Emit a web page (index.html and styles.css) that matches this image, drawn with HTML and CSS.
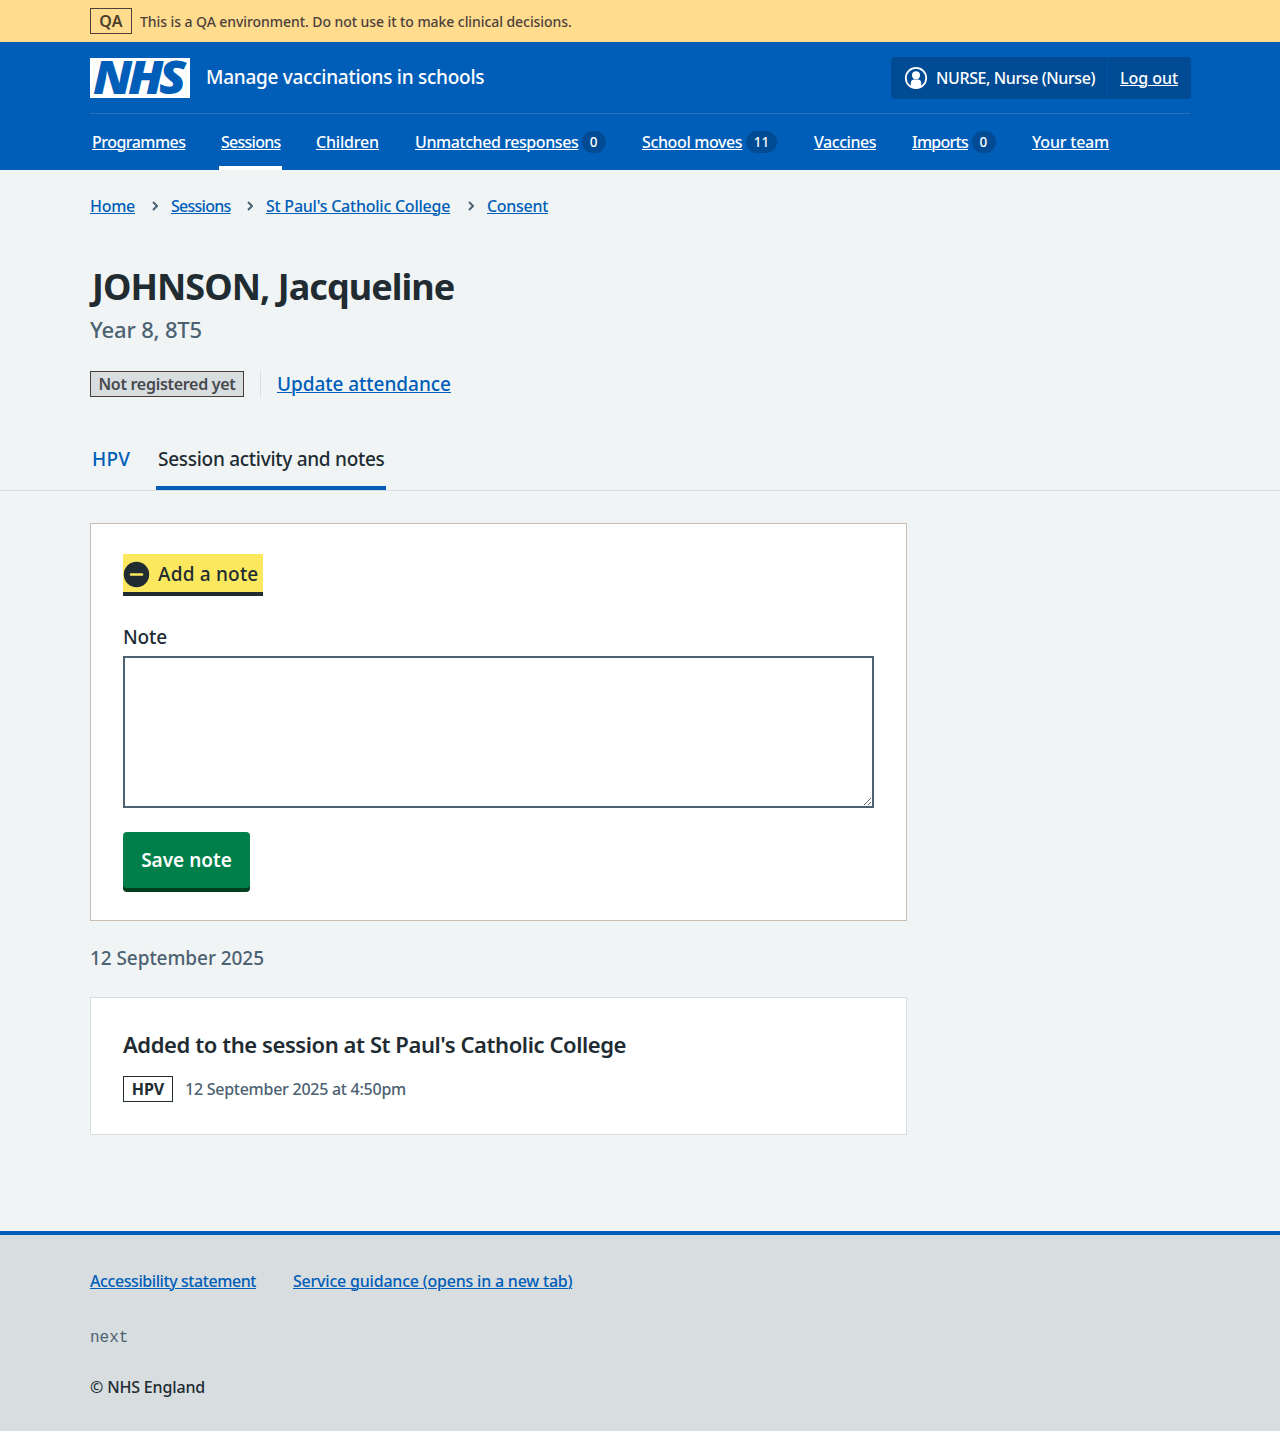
FILE: index.html
```html
<!DOCTYPE html>
<html lang="en">
<head>
<meta charset="utf-8">
<title>JOHNSON, Jacqueline – Manage vaccinations in schools</title>
<link rel="stylesheet" href="styles.css">
</head>
<body>
<div class="env">
  <div class="container env-inner">
    <strong class="tag tag-env">QA</strong>
    <span class="env-text">This is a QA environment. Do not use it to make clinical decisions.</span>
  </div>
</div>

<header class="header">
  <div class="container">
    <div class="header-top">
      <a class="brand" href="#">
        <svg class="logo" viewBox="0 0 100 40" width="100" height="40" role="img" aria-label="NHS">
          <rect width="100" height="40" fill="#fff"/>
          <text class="logo-text" x="3" y="36.2" textLength="89" lengthAdjust="spacingAndGlyphs">NHS</text>
        </svg>
        <span class="service">Manage vaccinations in schools</span>
      </a>
      <div class="account">
        <span class="account-user">
          <svg class="user-icon" viewBox="0 0 24 24" width="24" height="24" aria-hidden="true">
            <circle cx="12" cy="12" r="10.200" fill="none" stroke="#fff" stroke-width="1.800"/>
            <circle cx="12" cy="9.200" r="4" fill="#fff"/>
            <path d="M6.800 21v-4a3.500 3.500 0 0 1 3.500-3.500h3.400a3.500 3.500 0 0 1 3.500 3.500v4l-5.200 2z" fill="#fff"/>
          </svg>
          <span class="user-name">NURSE, Nurse (Nurse)</span>
        </span>
        <span class="account-out"><a class="logout" href="#">Log out</a></span>
      </div>
    </div>
    <nav class="nav">
      <span class="nav-item nav-programmes"><a href="#">Programmes</a></span>
      <span class="nav-item nav-sessions current"><a href="#">Sessions</a></span>
      <span class="nav-item nav-children"><a href="#">Children</a></span>
      <span class="nav-item nav-unmatched"><a href="#">Unmatched responses</a><span class="count">0</span></span>
      <span class="nav-item nav-moves"><a href="#">School moves</a><span class="count">11</span></span>
      <span class="nav-item nav-vaccines"><a href="#">Vaccines</a></span>
      <span class="nav-item nav-imports"><a href="#">Imports</a><span class="count">0</span></span>
      <span class="nav-item nav-team"><a href="#">Your team</a></span>
    </nav>
  </div>
</header>

<div class="container">
  <nav class="breadcrumb">
    <a class="bc-home" href="#">Home</a>
    <svg class="chevron" viewBox="0 0 6 10" width="6" height="10"><path d="M1 1l4 4-4 4"/></svg>
    <a class="bc-sessions" href="#">Sessions</a>
    <svg class="chevron" viewBox="0 0 6 10" width="6" height="10"><path d="M1 1l4 4-4 4"/></svg>
    <a class="bc-school" href="#">St Paul's Catholic College</a>
    <svg class="chevron" viewBox="0 0 6 10" width="6" height="10"><path d="M1 1l4 4-4 4"/></svg>
    <a class="bc-consent" href="#">Consent</a>
  </nav>
  <h1 class="title">JOHNSON, Jacqueline</h1>
  <p class="caption">Year 8, 8T5</p>
  <div class="actions">
    <strong class="tag tag-grey">Not registered yet</strong>
    <span class="action"><a class="update" href="#">Update attendance</a></span>
  </div>
</div>

<nav class="tabs">
  <div class="container tabs-inner">
    <a class="tab tab-hpv" href="#">HPV</a>
    <a class="tab tab-activity tab-current" href="#">Session activity and notes</a>
  </div>
</nav>

<main class="container">
  <div class="column">
    <section class="card note-card">
      <div class="expander">
        <svg class="minus" viewBox="0 0 27 27" width="27" height="27" aria-hidden="true">
          <circle cx="13.500" cy="13.500" r="12.700" fill="#212b32"/>
          <path d="M8 13.500h11" stroke="#fbe85f" stroke-width="2.600" stroke-linecap="round"/>
        </svg>
        <span class="expander-text">Add a note</span>
      </div>
      <label class="label" for="note">Note</label>
      <textarea class="textarea" id="note"></textarea>
      <button class="button" type="button">Save note</button>
    </section>
    <h2 class="date">12 September 2025</h2>
    <section class="card event">
      <h3 class="event-title">Added to the session at St Paul's Catholic College</h3>
      <div class="event-meta">
        <strong class="tag tag-hpv">HPV</strong>
        <span class="event-time">12 September 2025 at 4:50pm</span>
      </div>
    </section>
  </div>
</main>

<footer class="footer">
  <div class="container">
    <div class="footer-links">
      <a class="fl-access" href="#">Accessibility statement</a>
      <a class="fl-guide" href="#">Service guidance (opens in a new tab)</a>
    </div>
    <p class="version">next</p>
    <p class="copyright">© NHS England</p>
  </div>
</footer>
</body>
</html>
```
FILE: styles.css
```css
* { box-sizing: border-box; }

body {
  margin: 0;
  background: #f0f4f5;
  color: #212b32;
  font: 500 16px/24px "Noto Sans", "Open Sans", sans-serif;
  white-space: nowrap;
}

h1, h2, h3, p { margin: 0; }

a {
  color: #005eb8;
  text-decoration: underline;
  text-decoration-thickness: 1px;
  text-underline-offset: 1px;
}

.container { width: 1100px; margin: 0 auto; }

/* Tags */
.tag {
  display: flex;
  align-items: center;
  justify-content: center;
  height: 26px;
  border: 1px solid;
  font-size: 16px;
  font-weight: 600;
}
.tag-env { width: 42px; color: #4d3f2b; letter-spacing: .2px; border-color: #4d3f3b; }
.tag-grey { width: 154px; background: #d8dde0; color: #46494c; border-color: #4a3c36; letter-spacing: -.29px; }
.tag-hpv { width: 50px; color: #212b32; font-weight: 700; letter-spacing: -.1px; }

/* Environment banner */
.env { background: #ffdc8e; color: #4d3f3b; height: 42px; }
.env-inner { display: flex; align-items: center; gap: 8px; height: 42px; }
.env-text { font-size: 14px; letter-spacing: -.07px; padding-top: 1px; }

/* Header */
.header { background: #005eb8; height: 128px; }
.header a { color: #fff; }
.header-top {
  display: flex;
  align-items: center;
  justify-content: space-between;
  height: 72px;
  border-bottom: 1px solid #2674c2;
}
.brand { display: flex; align-items: center; gap: 16px; text-decoration: none; padding-top: 1px; }
.logo { display: block; overflow: visible; }
.logo-text { font: italic 800 46px "Open Sans", "Noto Sans", sans-serif; letter-spacing: -4px; fill: #005eb8; }
.service { font-size: 19px; letter-spacing: -.27px; line-height: 28px; margin-top: -2px; }
.account {
  display: flex;
  width: 300px;
  height: 42px;
  margin-right: -1px;
  border-radius: 4px;
  background: #004b93;
  color: #fff;
  padding: 1px 0;
}
.account-user { display: flex; align-items: center; width: 217px; padding-left: 13px; border-right: 1px solid #0056a9; }
.user-icon { margin-right: 8px; }
.user-name { letter-spacing: -.4px; }
.account-out { display: flex; align-items: center; padding-left: 12px; }
.logout { letter-spacing: -.05px; }

.nav { display: flex; gap: 32px; height: 56px; }
.nav-item { display: flex; align-items: center; gap: 3.5px; padding: 5px 2px 1px; border-bottom: 4px solid transparent; }
.nav-item.current { border-bottom-color: #fff; }
.nav-programmes { width: 97px; letter-spacing: -.53px; }
.nav-sessions { width: 63px; letter-spacing: -.74px; }
.nav-children { width: 67px; letter-spacing: -.18px; }
.nav-unmatched { width: 195px; letter-spacing: -.42px; }
.nav-moves { width: 140px; letter-spacing: -.37px; }
.nav-vaccines { width: 66px; letter-spacing: -.46px; }
.nav-imports { width: 88px; letter-spacing: -.74px; }
.nav-team { width: 81px; letter-spacing: -.21px; }
.count {
  min-width: 24px;
  height: 22px;
  padding: 0 8px;
  border-radius: 11px;
  background: #004b93;
  color: #fff;
  font-size: 13.500px;
  line-height: 23px;
  letter-spacing: 0;
}

/* Page heading */
.breadcrumb { display: flex; align-items: center; padding-top: 24px; }
.chevron { margin: 0 13px 0 17px; fill: none; stroke: #4c6272; stroke-width: 2; }
.bc-home { width: 45px; letter-spacing: -.27px; }
.bc-sessions { width: 59px; letter-spacing: -.74px; }
.bc-school { width: 185px; letter-spacing: -.24px; }
.bc-consent { letter-spacing: -.3px; }
.title { margin-top: 48px; padding-left: 2px; font-size: 36px; font-weight: 700; line-height: 42px; letter-spacing: -.96px; }
.caption { margin-top: 5px; color: #4c6272; font-size: 22px; line-height: 33px; letter-spacing: -.17px; }
.actions { display: flex; margin-top: 25px; gap: 16px; }
.action { display: flex; align-items: center; border-left: 1px solid #d8dde0; padding-left: 16px; font-size: 19px; }
.update { letter-spacing: -.04px; }

/* Tabs */
.tabs { margin-top: 33px; border-bottom: 1px solid #d8dde0; }
.tabs-inner { display: flex; gap: 24px; height: 60px; }
.tab { padding: 15px 2px 12px; font-size: 19px; line-height: 29px; text-decoration: none; border-bottom: 4px solid transparent; }
.tab-hpv { width: 42px; letter-spacing: .17px; }
.tab-activity { width: 230px; letter-spacing: -.28px; }
.tab-current { color: #212b32; border-bottom-color: #005eb8; }

/* Cards */
.column { width: 817px; padding-top: 32px; }
.card { background: #fff; border: 1px solid #d8dde0; padding: 30px 32px; }
.note-card { height: 398px; border-color: #c8bdb1; }
.expander { display: flex; align-items: center; width: 140px; height: 42px; padding-top: 1px; background: #fbe85f; border-bottom: 4px solid #212b32; }
.minus { margin-top: 1px; }
.expander-text { margin-left: 8px; font-size: 19px; letter-spacing: .2px; }
.label { display: block; margin-top: 26px; font-size: 19px; line-height: 30px; letter-spacing: -.13px; }
.textarea { display: block; width: 751px; height: 152px; margin-top: 4px; border: 2px solid #4c6272; background: #fff; color: #4c6272; resize: vertical; outline: 0; }
.button {
  display: block;
  width: 127px;
  height: 56px;
  margin-top: 24px;
  padding: 0;
  border: 0;
  border-radius: 4px;
  box-shadow: 0 4px 0 #00401e;
  background: #007f4b;
  color: #fff;
  font: 600 19px/28px "Noto Sans", "Open Sans", sans-serif;
}
.date { margin-top: 22px; color: #4c6272; font-size: 19px; font-weight: 500; line-height: 30px; letter-spacing: -.07px; }
.event { height: 138px; margin-top: 24px; padding-top: 29px; }
.event-title { font-size: 22px; font-weight: 600; line-height: 34px; letter-spacing: -.42px; }
.event-meta { display: flex; align-items: center; gap: 12px; margin-top: 15px; color: #4c6272; }
.event-time { letter-spacing: -.26px; }

/* Footer */
.footer { margin-top: 96px; height: 200px; padding-top: 34px; border-top: 4px solid #005eb8; background: #d8dde0; }
.footer-links { display: flex; gap: 37px; }
.fl-access { width: 166px; letter-spacing: -.42px; }
.fl-guide { letter-spacing: -.21px; }
.version { margin-top: 33px; color: #4c6272; font: 16px/24px "Liberation Mono", monospace; }
.copyright { margin-top: 25px; letter-spacing: -.16px; }
```
